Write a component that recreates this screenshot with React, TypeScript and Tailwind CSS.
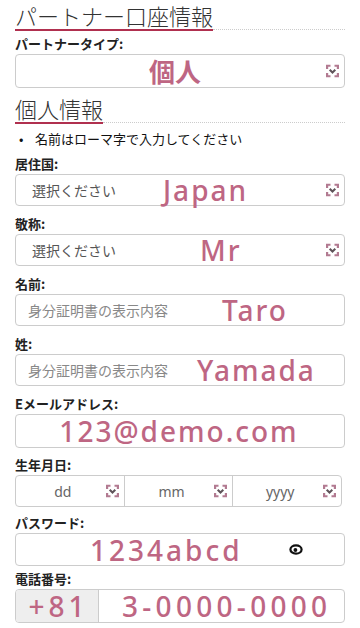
import React from 'react';

const jp = { fontFamily: '"Noto Sans CJK JP", "Noto Sans", sans-serif' };
const val = { fontFamily: '"Noto Sans", "Noto Sans CJK JP", sans-serif' };

function SelectIcon() {
	return (
		<svg
			className="absolute right-[5px] top-1/2 size-[13px] -translate-y-1/2"
			fill="none"
			strokeWidth={2.2}
			viewBox="0 0 13 13"
		>
			<path d="M1.1 4.5V1.1h3.4M8.5 1.1h3.4v3.4M11.9 8.5v3.4H8.5M4.5 11.9H1.1V8.5" stroke="#b27a91" />
			<path d="M3.7 5.2 6.5 8 9.3 5.2" stroke="#5f5359" strokeWidth={2} />
		</svg>
	);
}

function EyeIcon() {
	return (
		<svg className="h-[11px] w-[14px]" fill="none" viewBox="0 0 14 11">
			<ellipse cx="7" cy="5.5" rx="5.6" ry="4.2" stroke="#111" strokeWidth={2.2} />
			<circle cx="6.4" cy="6" fill="#111" r="1.9" />
		</svg>
	);
}

function Heading({ children }: { children: React.ReactNode }) {
	return (
		<div className="flex items-end">
			<span
				className="border-b-2 border-[#b0304f] text-[22px] font-light leading-[28px] text-[#333]"
				style={jp}
			>
				{children}
			</span>
			<div className="mb-[1px] flex-1 border-b border-dotted border-[#ccc]" />
		</div>
	);
}

function Label({ children, className }: { children: React.ReactNode; className: string }) {
	return (
		<div className={`text-[13px] font-bold leading-[16px] text-[#222] ${className}`} style={jp}>
			{children}
		</div>
	);
}

function Value({ children, className }: { children: React.ReactNode; className?: string }) {
	return (
		<span
			className={`text-[28px] font-medium leading-[30px] text-[#be6683] ${className ?? 'tracking-[2px]'}`}
			style={val}
		>
			{children}
		</span>
	);
}

export default function App() {
	return (
		<div className="min-h-[628px] w-[360px] bg-white px-[15px] pt-[1px]" style={jp}>
			<Heading>パートナー口座情報</Heading>

			<Label className="mt-[5px]">パートナータイプ:</Label>
			<div className="relative mt-[2px] flex h-[34px] items-center justify-center rounded-[4px] border border-[#ccc] pr-[10px]">
				<span className="text-[26px] font-bold leading-none text-[#be6683]" style={jp}>
					個人
				</span>
				<SelectIcon />
			</div>

			<div className="mt-[6px]">
				<Heading>個人情報</Heading>
			</div>

			<div className="mt-[7px] flex items-center text-[13px] leading-[16px] text-[#111]">
				<span className="w-[20px] pl-[4px]">•</span>
				<span>名前はローマ字で入力してください</span>
			</div>

			<Label className="mt-[9px]">居住国:</Label>
			<div className="relative mt-[2px] flex h-[32px] items-center rounded-[4px] border border-[#ccc] pl-[16px]">
				<span className="w-[131px] shrink-0 text-[14px] text-[#555]">選択ください</span>
				<Value>Japan</Value>
				<SelectIcon />
			</div>

			<Label className="mt-[10px]">敬称:</Label>
			<div className="relative mt-[2px] flex h-[32px] items-center rounded-[4px] border border-[#ccc] pl-[16px]">
				<span className="w-[168px] shrink-0 text-[14px] text-[#555]">選択ください</span>
				<Value>Mr</Value>
				<SelectIcon />
			</div>

			<Label className="mt-[10px]">名前:</Label>
			<div className="mt-[2px] flex h-[32px] items-center rounded-[4px] border border-[#ccc] pl-[12px]">
				<span className="w-[194px] shrink-0 text-[14px] text-[#888]">身分証明書の表示内容</span>
				<Value>Taro</Value>
			</div>

			<Label className="mt-[10px]">姓:</Label>
			<div className="mt-[2px] flex h-[32px] items-center rounded-[4px] border border-[#ccc] pl-[12px]">
				<span className="w-[169px] shrink-0 text-[14px] text-[#888]">身分証明書の表示内容</span>
				<Value>Yamada</Value>
			</div>

			<Label className="mt-[10px]">Eメールアドレス:</Label>
			<div className="mt-[2px] flex h-[34px] items-center justify-center rounded-[4px] border border-[#ccc] pr-[2px]">
				<Value>123@demo.com</Value>
			</div>

			<Label className="mt-[9px]">生年月日:</Label>
			<div className="mt-[2px] flex h-[32px] w-[327px] rounded-[4px] border border-[#ccc]">
				{['dd', 'mm', 'yyyy'].map((p, i) => (
					<div
						className={`relative flex flex-1 items-center justify-center pr-[14px] text-[14px] text-[#666] ${i > 0 ? 'border-l border-[#ccc]' : ''}`}
						key={p}
						style={val}
					>
						{p}
						<SelectIcon />
					</div>
				))}
			</div>

			<Label className="mt-[8px]">パスワード:</Label>
			<div className="mt-[2px] flex h-[33px] items-center rounded-[4px] border border-[#ccc] pl-[74px] pr-[41px]">
				<Value className="tracking-[3px]">1234abcd</Value>
				<span className="ml-auto">
					<EyeIcon />
				</span>
			</div>

			<Label className="mt-[5px]">電話番号:</Label>
			<div className="mt-[2px] flex h-[34px] rounded-[4px] border border-[#ccc]">
				<div className="flex w-[83px] items-center justify-center rounded-l-[3px] border-r border-[#ccc] bg-[#eee] pl-[3px]">
					<Value className="tracking-[4px]">+81</Value>
				</div>
				<div className="flex flex-1 items-center pl-[23px]">
					<Value className="tracking-[4.3px]">3-0000-0000</Value>
				</div>
			</div>
		</div>
	);
}
